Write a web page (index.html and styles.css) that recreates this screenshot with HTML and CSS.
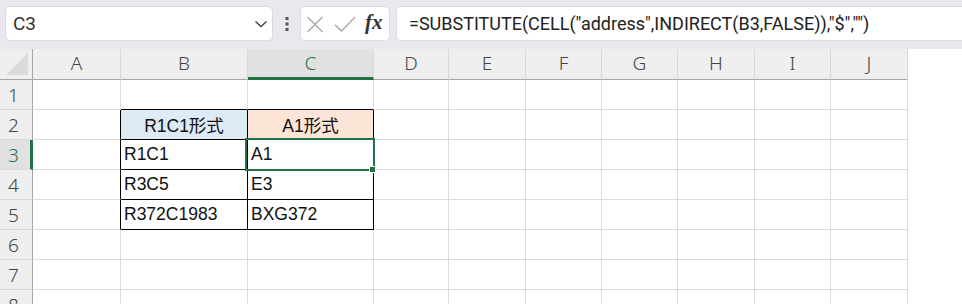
FILE: index.html
```html
<!DOCTYPE html>
<html lang="ja">
<head>
<meta charset="utf-8">
<title>Excel</title>
<link rel="stylesheet" href="styles.css">
</head>
<body>
<div class="toolbar">
  <div class="namebox">
    <span class="nb-text">C3</span>
    <svg class="chev" width="14" height="8" viewBox="0 0 14 8"><path d="M1.5 1.5 L7 6.5 L12.5 1.5" fill="none" stroke="#444" stroke-width="1.5"/></svg>
  </div>
  <div class="dots">
    <svg width="4" height="16" viewBox="0 0 4 16"><rect x="0.5" y="1" width="3" height="3" fill="#555"/><rect x="0.5" y="6.5" width="3" height="3" fill="#555"/><rect x="0.5" y="12" width="3" height="3" fill="#555"/></svg>
  </div>
  <div class="fbtns">
    <svg class="ic-x" width="18" height="17" viewBox="0 0 18 17"><path d="M1.5 1 L16.5 16 M16.5 1 L1.5 16" stroke="#a9a9a9" stroke-width="1.4" fill="none"/></svg>
    <svg class="ic-ok" width="22" height="16" viewBox="0 0 22 16"><path d="M1 9 L7.5 15 L21 1" stroke="#a9a9a9" stroke-width="1.4" fill="none"/></svg>
    <span class="fx">fx</span>
  </div>
  <div class="formula">=SUBSTITUTE(CELL("address",INDIRECT(B3,FALSE)),"$","")</div>
</div>

<div class="sheet">
  <div class="corner"><span class="tri"></span></div>
  <div class="ch">A</div>
  <div class="ch">B</div>
  <div class="ch ch-act">C</div>
  <div class="ch">D</div>
  <div class="ch">E</div>
  <div class="ch">F</div>
  <div class="ch">G</div>
  <div class="ch">H</div>
  <div class="ch">I</div>
  <div class="ch">J</div>

  <div class="rh">1</div>
  <div class="c"></div><div class="c tb"></div><div class="c tb"></div><div class="c"></div><div class="c"></div><div class="c"></div><div class="c"></div><div class="c"></div><div class="c"></div><div class="c"></div>

  <div class="rh">2</div>
  <div class="c tr"></div><div class="c t hd blue">R1C1形式</div><div class="c t hd peach">A1形式</div><div class="c"></div><div class="c"></div><div class="c"></div><div class="c"></div><div class="c"></div><div class="c"></div><div class="c"></div>

  <div class="rh rh-act">3</div>
  <div class="c tr"></div><div class="c t">R1C1</div><div class="c t active">A1<span class="sel"><span class="handle"></span></span></div><div class="c"></div><div class="c"></div><div class="c"></div><div class="c"></div><div class="c"></div><div class="c"></div><div class="c"></div>

  <div class="rh">4</div>
  <div class="c tr"></div><div class="c t">R3C5</div><div class="c t">E3</div><div class="c"></div><div class="c"></div><div class="c"></div><div class="c"></div><div class="c"></div><div class="c"></div><div class="c"></div>

  <div class="rh">5</div>
  <div class="c tr"></div><div class="c t">R372C1983</div><div class="c t">BXG372</div><div class="c"></div><div class="c"></div><div class="c"></div><div class="c"></div><div class="c"></div><div class="c"></div><div class="c"></div>

  <div class="rh">6</div>
  <div class="c"></div><div class="c"></div><div class="c"></div><div class="c"></div><div class="c"></div><div class="c"></div><div class="c"></div><div class="c"></div><div class="c"></div><div class="c"></div>

  <div class="rh">7</div>
  <div class="c"></div><div class="c"></div><div class="c"></div><div class="c"></div><div class="c"></div><div class="c"></div><div class="c"></div><div class="c"></div><div class="c"></div><div class="c"></div>

  <div class="rh">8</div>
  <div class="c"></div><div class="c"></div><div class="c"></div><div class="c"></div><div class="c"></div><div class="c"></div><div class="c"></div><div class="c"></div><div class="c"></div><div class="c"></div>
</div>
</body>
</html>
```

FILE: styles.css
```css
* { box-sizing: border-box; }
html, body { margin: 0; padding: 0; }
body {
  width: 962px;
  height: 304px;
  overflow: hidden;
  background: #ffffff;
  font-family: "Liberation Sans", "Noto Sans CJK JP", sans-serif;
}

.toolbar {
  height: 49px;
  background: #e7e9ee;
  display: flex;
  align-items: flex-start;
  padding: 6px 0 0 5px;
}
.namebox {
  width: 268px;
  height: 35px;
  background: #fff;
  border: 1px solid #d9dbe0;
  border-radius: 5px;
  display: flex;
  align-items: center;
  justify-content: space-between;
  padding: 0 4px 0 7px;
}
.nb-text {
  font-size: 19px;
  color: #333;
  font-family: "Roboto", "Liberation Sans", sans-serif;
}
.chev { margin-top: 1px; }
.dots {
  width: 27px;
  height: 35px;
  display: flex;
  align-items: center;
  justify-content: center;
}
.dots svg { margin-left: 1px; }
.fbtns {
  width: 90px;
  height: 35px;
  background: #fff;
  border: 1px solid #d9dbe0;
  border-radius: 5px;
  display: flex;
  align-items: center;
  padding: 0 0 0 5px;
}
.ic-x { margin-top: 1px; }
.ic-ok { margin-left: 10px; }
.fx {
  margin-left: 9px;
  font-family: "Liberation Serif", "DejaVu Serif", serif;
  font-style: italic;
  font-weight: bold;
  font-size: 21px;
  color: #333;
  margin-top: -2px;
}
.formula {
  flex: 1;
  margin-left: 6px;
  height: 35px;
  background: #fff;
  border: 1px solid #d9dbe0;
  border-right: none;
  border-radius: 5px 0 0 5px;
  display: flex;
  align-items: center;
  padding-left: 12px;
  font-family: "Roboto", "Liberation Sans", sans-serif;
  font-size: 18px;
  color: #222;
  white-space: nowrap;
  letter-spacing: 0;
}

.sheet {
  display: grid;
  grid-template-columns: 33px 88px 127px 126px 75px 77px 76px 76px 77px 76px 77px;
  grid-template-rows: 31px repeat(8, 30px);
}

.corner {
  background: #efefef;
  border-right: 1px solid #a6a6a6;
  border-bottom: 1px solid #a6a6a6;
  position: relative;
}
.tri {
  position: absolute;
  right: 4px;
  bottom: 4px;
  width: 0;
  height: 0;
  border-left: 22px solid transparent;
  border-bottom: 22px solid #dadada;
}
.ch {
  background: #efefef;
  border-right: 1px solid #d9d9d9;
  border-bottom: 1px solid #a6a6a6;
  display: flex;
  align-items: center;
  justify-content: center;
  font-family: "Noto Sans", "Liberation Sans", sans-serif;
  font-weight: 300;
  font-size: 19px;
  color: #444;
  padding-bottom: 2px;
}
.ch-act {
  background: #e1e1e1;
  color: #217346;
  border-bottom: 3px solid #217346;
  padding-bottom: 0;
}
.rh {
  background: #efefef;
  border-right: 1px solid #a6a6a6;
  border-bottom: 1px solid #d9d9d9;
  display: flex;
  align-items: center;
  padding-left: 8px;
  font-family: "Noto Sans", "Liberation Sans", sans-serif;
  font-weight: 300;
  font-size: 19px;
  color: #444;
}
.rh-act {
  background: #e1e1e1;
  color: #217346;
  border-right: 3px solid #217346;
}
.c {
  border-right: 1px solid #dcdcdc;
  border-bottom: 1px solid #dcdcdc;
  display: flex;
  align-items: center;
  padding-left: 3px;
  font-size: 17.5px;
  color: #111;
  white-space: nowrap;
}
.c.t {
  border-right: 1px solid #000;
  border-bottom: 1px solid #000;
}
.c.tb { border-bottom: 1px solid #000; }
.c.tr { border-right: 1px solid #000; }
.c.hd {
  justify-content: center;
  padding-left: 0;
}
.blue { background: #ddebf7; }
.peach { background: #fce4d6; }

.active { position: relative; }
.sel {
  position: absolute;
  left: -3px;
  top: -2px;
  right: -2px;
  bottom: -2px;
  border: 2px solid #217346;
}
.handle {
  position: absolute;
  right: -3px;
  bottom: -4px;
  width: 7px;
  height: 7px;
  background: #217346;
  border: 1px solid #fff;
}
```
